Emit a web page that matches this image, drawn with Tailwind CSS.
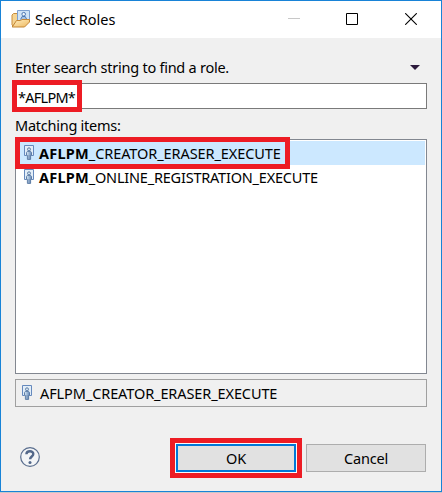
<!DOCTYPE html>
<html lang="en">
<head>
<meta charset="utf-8">
<title>Select Roles</title>
<script src="https://cdn.jsdelivr.net/npm/@tailwindcss/browser@4"></script>
</head>
<body class="bg-[#c8c8c8] overflow-hidden">
<svg class="absolute h-0 w-0">
  <defs>
    <linearGradient id="bodyBlue" x1="0" x2="1"><stop offset="0" stop-color="#dcecf6"/><stop offset="1" stop-color="#6488b8"/></linearGradient>
    <linearGradient id="folder" x1="0" y1="0" x2="1" y2="1"><stop offset="0" stop-color="#fff0c4"/><stop offset="1" stop-color="#eeb85f"/></linearGradient>
    <symbol id="role" viewBox="0 0 10 15">
      <path d="M2.5 10.5H.5V.5h9v10h-2" fill="#e3eef8" stroke="#6589bd"/>
      <path d="M3.4 6.4h3.2l.9 1v3H6.6v4H3.4v-4h-.9v-3z" fill="url(#bodyBlue)" stroke="#53749f" stroke-width=".9"/>
      <path d="M5 10v4" stroke="#53749f" stroke-width=".6"/>
      <circle cx="5" cy="4.3" r="1.5" fill="#d5e5f1" stroke="#53749f" stroke-width=".9"/>
    </symbol>
  </defs>
</svg>
<main class="w-[442px] h-[492px] border border-[#1883d7] bg-[#f0f0f0] font-['Noto_Sans','Open_Sans',sans-serif] text-[14.5px] leading-5 text-black whitespace-nowrap">
  <header class="flex h-[37px] bg-white pl-[10px]">
    <svg class="mt-[9px] h-[18px] w-5 shrink-0" viewBox="0 0 20 18">
      <path d="M1 15V5l1.5-1.5h4L8 5v4l-6 7z" fill="#f5d493" stroke="#c98d3c"/>
      <path d="M6.5.5h12v11h-12z" fill="#d0e4f7" stroke="#7ca0d0"/>
      <circle cx="12.7" cy="4.2" r="1.8" fill="#eef6fc" stroke="#4f79b3"/>
      <path d="M9.5 9.5l1.7-3h3l1.6 3" fill="#a8c4e4" stroke="#4f79b3"/>
      <path d="M1.2 17L5.5 10.5h4l1.5-1h7.5V12l-5 5z" fill="url(#folder)" stroke="#c48735" stroke-linejoin="round"/>
    </svg>
    <h1 class="ml-[4px] mt-[8px] w-[110px] tracking-[-0.03px]">Select Roles</h1>
    <div class="ml-auto flex">
      <svg class="mt-[11px] mr-[46px] h-[14px] w-3" viewBox="0 0 12 14"><path d="M0 6.5h12" stroke="#c8c8c8"/></svg>
      <svg class="mt-[12px] mr-[47px] h-3 w-3" viewBox="0 0 12 12"><path d="M.5.5h11v11H.5z" fill="none" stroke="#000"/></svg>
      <svg class="mt-[12px] mr-[24px] h-3 w-3" viewBox="0 0 12 12"><path d="M.2.2l11.6 11.6M11.8.2L.2 11.8" stroke="#000" stroke-width="1.1"/></svg>
    </div>
  </header>
  <section class="px-[14px]">
    <div class="flex h-[45px] justify-between pt-[19px]">
      <label class="tracking-[-0.25px]">Enter search string to find a role.</label>
      <svg class="mt-[8px] mr-[7px] h-[5px] w-[10px]" viewBox="0 0 10 5"><path d="M0 0h10L5 5z" fill="#2c1a3c"/></svg>
    </div>
    <div class="relative h-[26px] w-[412px] border border-[#7a7a7a] bg-white">
      <div class="ml-[2px] mt-[3px] tracking-[-0.75px]">*AFLPM*</div>
      <div class="absolute -left-[4px] -top-[4px] h-8 w-[70px] border-5 border-[#ed1c24]"></div>
    </div>
    <h2 class="h-[30px] pt-[6px] tracking-[-0.25px]">Matching items:</h2>
    <div class="relative h-[235px] w-[412px] border border-[#828790] bg-white pt-px pr-px">
      <div class="flex h-6 bg-[#cce8ff]">
        <svg class="ml-2 mt-[4px] h-[15px] w-[10px]"><use href="#role"/></svg>
        <span class="ml-[5px] mt-[2px] tracking-[-0.08px]"><b class="tracking-[0.2px]">AFLPM</b>_CREATOR_ERASER_EXECUTE</span>
      </div>
      <div class="flex h-6">
        <svg class="ml-2 mt-[4px] h-[15px] w-[10px]"><use href="#role"/></svg>
        <span class="ml-[5px] mt-[2px] tracking-[-0.21px]"><b class="tracking-[0.2px]">AFLPM</b>_ONLINE_REGISTRATION_EXECUTE</span>
      </div>
      <div class="absolute -left-px -top-[3px] h-8 w-[275px] border-5 border-[#ed1c24]"></div>
    </div>
    <div class="mt-[5px] flex h-7 w-[412px] border border-[#a0a0a0]">
      <svg class="ml-[6px] mt-[5px] h-[15px] w-[10px]"><use href="#role"/></svg>
      <span class="ml-[8px] mt-[3px] tracking-[-0.1px]">AFLPM_CREATOR_ERASER_EXECUTE</span>
    </div>
    <footer class="mt-[37px] flex h-7 pl-[5px]">
      <svg class="mt-[3px] h-5 w-5" viewBox="0 0 20 20"><circle cx="10" cy="10" r="9.3" fill="#f3f5f7" stroke="#5a6e8e" stroke-width="1.2"/><path d="M6.4 7.2C6.6 3.3 13.4 3.3 13.3 7c0 2.4-3.2 2.6-3.2 5.3" fill="none" stroke="#53688a" stroke-width="2.4"/><circle cx="10" cy="15.4" r="1.5" fill="#53688a"/></svg>
      <div class="relative ml-[136px] h-7 w-[120px] border-2 border-[#0078d7] bg-[#e1e1e1] pt-[2px] text-center tracking-[-0.2px] outline outline-[#f8fafc]">OK
        <div class="absolute -left-[8px] -top-[8px] h-10 w-[132px] border-5 border-[#ed1c24]"></div>
      </div>
      <div class="ml-[10px] h-7 w-[120px] border border-[#adadad] bg-[#e1e1e1] pt-[3px] text-center tracking-[-0.2px]">Cancel</div>
    </footer>
  </section>
</main>
</body>
</html>
